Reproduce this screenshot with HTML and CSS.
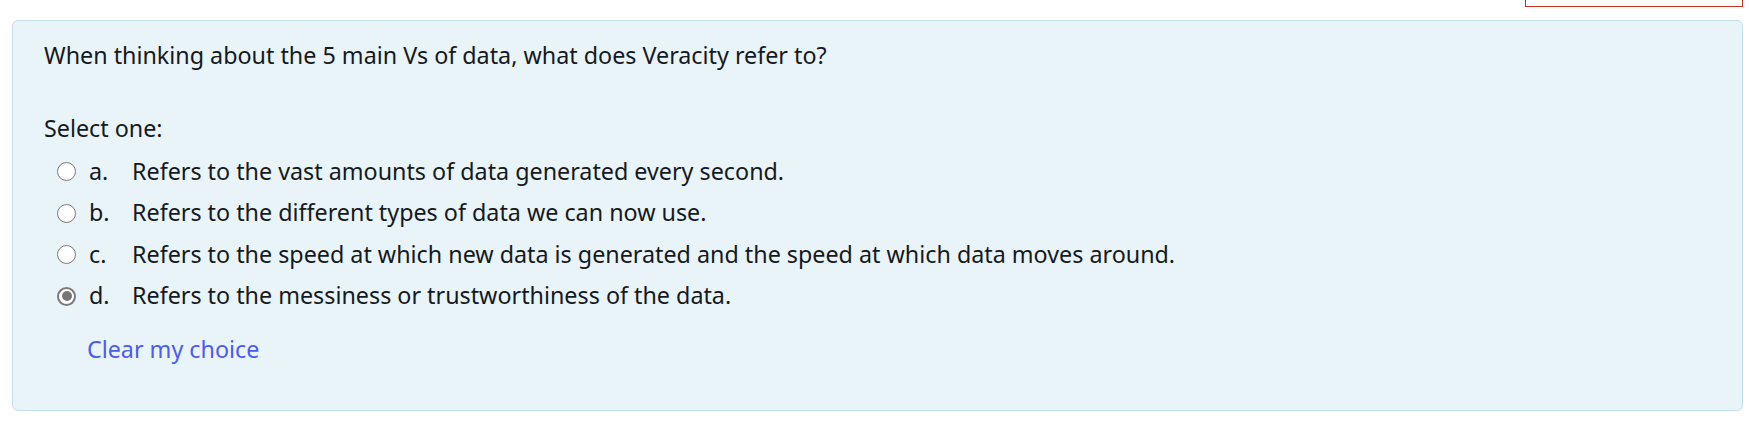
FILE: index.html
```html
<!DOCTYPE html>
<html>
<head>
<meta charset="utf-8">
<link rel="stylesheet" href="styles.css">
</head>
<body>
<div class="topbar"><div class="flagbox"></div></div>
<div class="formulation">
  <div class="qtext">When thinking about the 5 main Vs of data, what does Veracity refer to?</div>
  <div class="prompt">Select one:</div>
  <div class="answer">
    <div class="opt"><span class="radio"></span><span class="letter">a.</span><span class="text">Refers to the vast amounts of data generated every second.</span></div>
    <div class="opt"><span class="radio"></span><span class="letter">b.</span><span class="text">Refers to the different types of data we can now use.</span></div>
    <div class="opt"><span class="radio"></span><span class="letter">c.</span><span class="text">Refers to the speed at which new data is generated and the speed at which data moves around.</span></div>
    <div class="opt"><span class="radio checked"></span><span class="letter">d.</span><span class="text">Refers to the messiness or trustworthiness of the data.</span></div>
  </div>
  <div class="clear"><a class="clearlink" href="#">Clear my choice</a></div>
</div>
</body>
</html>
```
FILE: styles.css
```css
html, body {
  margin: 0;
  padding: 0;
  background: #ffffff;
}
body {
  font-family: "Noto Sans", "Liberation Sans", sans-serif;
  font-size: 23.3px;
  color: #16191d;
}
.topbar {
  height: 7px;
  display: flex;
  justify-content: flex-end;
  padding-right: 6px;
}
.flagbox {
  width: 216px;
  height: 6px;
  border: 1px solid #ca3120;
  border-top: none;
}
.formulation {
  margin: 13px 6px 0 12px;
  background: #e8f4f7;
  border: 1px solid #c3e0e7;
  border-radius: 6px;
  padding: 19px 31px 46px 31px;
}
.qtext {
  line-height: 30px;
}
.prompt {
  line-height: 30px;
  margin-top: 43px;
}
.answer {
  margin-top: 7px;
}
.opt {
  display: flex;
  align-items: center;
  padding: 5.75px 0 5.75px 13px;
  line-height: 30px;
}
.radio {
  width: 19px;
  height: 19px;
  box-sizing: border-box;
  border: 1.5px solid #7b7b7b;
  border-radius: 50%;
  background: #ffffff;
  margin-right: 13px;
  margin-top: 2px;
  flex: none;
  position: relative;
}
.radio.checked {
  border: 2px solid #7a7a7a;
}
.radio.checked::after {
  content: "";
  position: absolute;
  left: 2.5px;
  top: 2.5px;
  width: 10px;
  height: 10px;
  border-radius: 50%;
  background: #767676;
}
.letter {
  width: 43px;
  flex: none;
}
.clear {
  margin-top: 18px;
  padding-left: 43px;
  line-height: 30px;
}
.clearlink {
  color: #4d5bef;
  text-decoration: none;
}
```
